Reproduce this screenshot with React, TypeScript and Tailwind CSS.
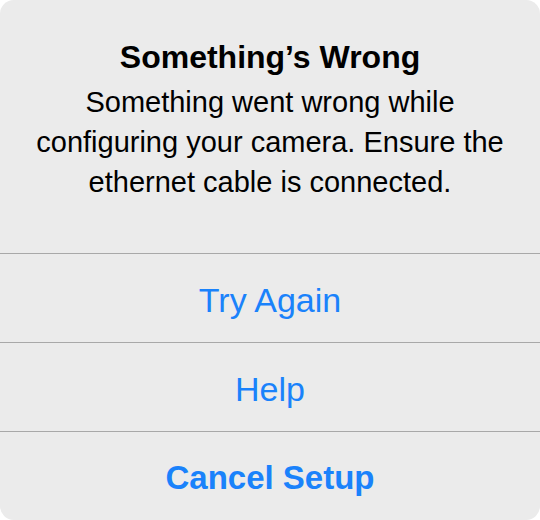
export default function App() {
  const actions = [
    { label: "Try Again", bold: false },
    { label: "Help", bold: false },
    { label: "Cancel Setup", bold: true },
  ];

  return (
    <div className="w-[540px] h-[520px] bg-white font-['Liberation_Sans',Arial,sans-serif]">
      <div className="flex h-full flex-col overflow-hidden rounded-[14px] bg-[#ebebeb]">
        <div className="flex h-[253px] flex-col items-center px-6 pt-[37px] text-center text-black">
          <h1 className="text-[32px] font-bold leading-[40px]">Something’s Wrong</h1>
          <p className="mt-[5px] text-[29px] leading-[40px]">
            Something went wrong while
            <br />
            configuring your camera. Ensure the
            <br />
            ethernet cable is connected.
          </p>
        </div>
        {actions.map((a) => (
          <button
            key={a.label}
            className={
              "flex h-[89px] items-center justify-center border-t border-[#a8a8a8] pt-[4px] text-[#1a82fb] " +
              (a.bold ? "text-[33px] font-bold" : "text-[34px] font-normal")
            }
          >
            {a.label}
          </button>
        ))}
      </div>
    </div>
  );
}
